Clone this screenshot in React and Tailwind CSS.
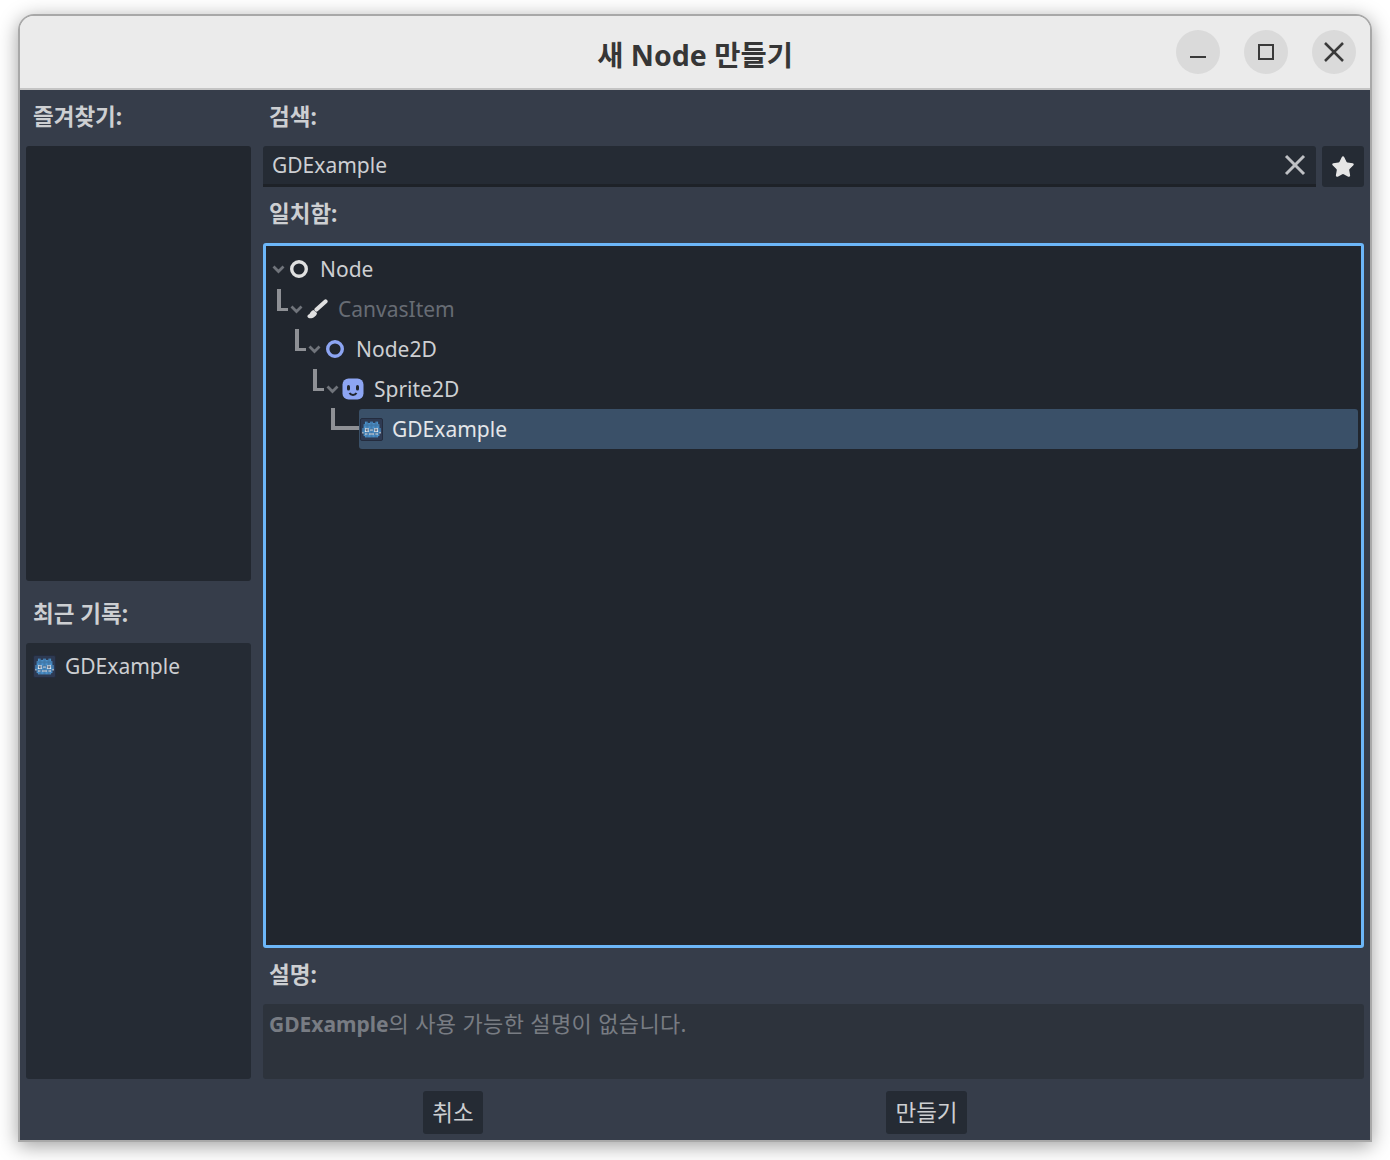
import { Star, X } from "lucide-react";

const FONT = "font-['Noto_Sans','Noto_Sans_CJK_KR',sans-serif]";

const godotPixels = [
  "................",
  "................",
  "...bb..bb..bb...",
  "...bbbbbbbbbb...",
  "..bbbbbbbbbbbb..",
  "..bbbbbbbbbbbb..",
  "..bbbbbbbbbbbb..",
  ".bbwwwbbbbwwwbb.",
  ".bbwdwbwwbwdwbb.",
  ".bbwwwbbbbwwwbb.",
  ".wbbbbbbbbbbbbw.",
  "..bwwbwwwwbwwb..",
  "..bbbbbbbbbbbb..",
  "...bbbbbbbbbb...",
  "................",
  "................",
];

const pixelColor = { b: "#4b92cc", w: "#dfeaf4", d: "#33415a" };

function GodotIcon() {
  return (
    <div className="w-[23px] h-[23px] shrink-0 rounded-[2px] bg-[#2e3a52] border border-[#242c3e] flex items-center justify-center">
      <svg width="21" height="21" viewBox="0 0 16 16">
        {godotPixels.map((row, y) =>
          row.split("").map((c, x) =>
            c === "." ? null : (
              <rect key={`${x}-${y}`} x={x} y={y} width="1.02" height="1.02" fill={pixelColor[c]} />
            )
          )
        )}
      </svg>
    </div>
  );
}

function Chevron() {
  return (
    <svg width="14" height="14" viewBox="0 0 14 14" className="shrink-0">
      <path d="M1.5 4.5 L6.5 9.5 L11.5 4.5" fill="none" stroke="#70747b" strokeWidth="2.8" />
    </svg>
  );
}

function Ring({ color }) {
  return (
    <svg width="20" height="20" viewBox="0 0 20 20" className="shrink-0">
      <circle cx="10" cy="10" r="7.3" fill="none" stroke={color} strokeWidth="3.4" />
    </svg>
  );
}

function BrushIcon() {
  return (
    <svg width="22" height="22" viewBox="0 0 22 22" className="shrink-0">
      <path d="M19.5 3.5 L10.5 11.5" fill="none" stroke="#e0e0e0" strokeWidth="4.2" strokeLinecap="round" />
      <path d="M7.5 12 L11 15 C10.5 18.5 6.5 20.8 3.5 20.3 C1 19.8 0.8 17.5 2.6 16.6 C4.4 15.8 4.4 13 7.5 12 Z" fill="#e0e0e0" />
    </svg>
  );
}

function SpriteIcon() {
  return (
    <svg width="24" height="24" viewBox="0 0 24 24" className="shrink-0">
      <rect x="1.5" y="1.5" width="21" height="21" rx="6" fill="#8da5f3" />
      <rect x="6" y="8" width="3" height="5.5" rx="1.5" fill="#21262e" />
      <rect x="15" y="8" width="3" height="5.5" rx="1.5" fill="#21262e" />
      <path d="M8.5 16 C10 18.5 14 18.5 15.5 16" fill="none" stroke="#21262e" strokeWidth="2" />
    </svg>
  );
}

function Connector() {
  return <div className="w-[11px] h-[22px] shrink-0 self-start border-l-4 border-b-[3px] border-[#8e9095]" />;
}

function TreeRow({ padding, icon, label, dim, first }) {
  return (
    <div className={`h-10 flex items-center ${padding}`}>
      {!first && <Connector />}
      <div className={first ? "" : "ml-[2px]"}>
        <Chevron />
      </div>
      <div className="w-[20px] ml-[3px] flex justify-center">{icon}</div>
      <span className={`ml-[11px] mt-[2px] text-[21px] ${dim ? "text-[#676c74]" : "text-[#cdcfd2]"}`}>{label}</span>
    </div>
  );
}

function SectionLabel({ children }) {
  return <div className="h-[56px] pl-[6px] pt-[10px] leading-[34px] font-bold text-[22.5px] text-[#cdcfd2]">{children}</div>;
}

function WindowButton({ children }) {
  return <div className="w-[44px] h-[44px] rounded-full bg-[#dadada] flex items-center justify-center text-[#3a3a3a]">{children}</div>;
}

export default function App() {
  return (
    <div className={`w-[1390px] h-[1160px] bg-white pl-[18px] pt-[14px] text-[22.5px] ${FONT}`}>
      <div className="w-[1354px] h-[1128px] flex flex-col rounded-t-[16px] border-2 border-[#a8a8a8] shadow-[0_4px_20px_rgba(0,0,0,0.38)] overflow-hidden">
        <div className="h-[74px] shrink-0 bg-[#ebebeb] border-b-2 border-[#c4c4c4] flex items-center justify-center relative">
          <span className="text-[28.5px] font-bold text-[#363636] mt-[7px]">새 Node 만들기</span>
          <div className="absolute right-[14px] top-[14px] flex gap-6">
            <WindowButton>
              <div className="w-[16px] h-[2px] bg-[#3a3a3a] mt-[10px]" />
            </WindowButton>
            <WindowButton>
              <div className="w-[16px] h-[16px] border-2 border-[#3a3a3a]" />
            </WindowButton>
            <WindowButton>
              <X size={36} strokeWidth={1.7} strokeLinecap="butt" />
            </WindowButton>
          </div>
        </div>

        <div className="flex-1 min-h-0 bg-[#363d4a] flex flex-col">
          <div className="flex-1 min-h-0 flex gap-3 px-[6px]">
            <div className="w-[225px] shrink-0 flex flex-col">
              <div className="pl-[1px]">
                <SectionLabel>즐겨찾기:</SectionLabel>
              </div>
              <div className="h-[435px] shrink-0 bg-[#22272f] rounded-[3px]" />
              <div className="h-[62px] shrink-0 pl-[7px] pt-[16px] leading-[34px] font-bold text-[#cdcfd2]">최근 기록:</div>
              <div className="flex-1 bg-[#252b34] rounded-[3px] pt-[11px] pl-[7px]">
                <div className="flex items-center h-[24px]">
                  <GodotIcon />
                  <span className="ml-[9px] mt-[2px] text-[21px] text-[#cdcfd2]">GDExample</span>
                </div>
              </div>
            </div>

            <div className="flex-1 min-w-0 flex flex-col">
              <SectionLabel>검색:</SectionLabel>
              <div className="flex gap-[6px] h-[41px] shrink-0">
                <div className="flex-1 bg-[#252b34] rounded-t-[3px] border-b-[3px] border-[#1e2228] flex items-center justify-between pl-[9px] pr-[3px]">
                  <span className="mt-[2px] text-[21px] text-[#cdcfd2]">GDExample</span>
                  <X size={36} strokeWidth={2} strokeLinecap="butt" className="text-[#bfc1c5]" />
                </div>
                <div className="w-[42px] bg-[#252b34] rounded-[3px] flex items-center justify-center">
                  <Star size={24} fill="#e6e6e6" stroke="#e6e6e6" strokeWidth={1.5} />
                </div>
              </div>
              <SectionLabel>일치함:</SectionLabel>
              <div className="flex-1 min-h-0 bg-[#21262e] border-[3px] border-[#6cb6f8] rounded-[3px] pt-[3px]">
                <TreeRow first padding="pl-[6px]" icon={<Ring color="#e0e0e0" />} label="Node" />
                <TreeRow padding="pl-[11px]" icon={<BrushIcon />} label="CanvasItem" dim />
                <TreeRow padding="pl-[29px]" icon={<Ring color="#8da5f3" />} label="Node2D" />
                <TreeRow padding="pl-[47px]" icon={<SpriteIcon />} label="Sprite2D" />
                <div className="h-10 flex pl-[65px] pr-[3px]">
                  <div className="w-[28px] h-[22px] shrink-0 -mt-[1px] border-l-4 border-b-4 border-[#8e9095]" />
                  <div className="flex-1 bg-[#3a5068] rounded-[3px] flex items-center pl-[1px]">
                    <GodotIcon />
                    <span className="ml-[9px] mt-[2px] text-[21px] text-[#e4e6e9]">GDExample</span>
                  </div>
                </div>
              </div>
              <SectionLabel>설명:</SectionLabel>
              <div className="h-[75px] shrink-0 bg-[#2d333c] rounded-[3px] px-[6px] pt-[3px] leading-[32px] text-[22px] tracking-[0.35px] text-[#787c83]">
                <span className="font-bold text-[21px] tracking-normal">GDExample</span>의 사용 가능한 설명이 없습니다.
              </div>
            </div>
          </div>

          <div className="shrink-0 flex justify-evenly pt-3 pb-[6px]">
            <div className="h-[43px] w-[60px] bg-[#252b34] rounded-[3px] flex items-center justify-center text-[#cdcfd2]">취소</div>
            <div className="h-[43px] w-[81px] bg-[#252b34] rounded-[3px] flex items-center justify-center text-[#cdcfd2]">만들기</div>
          </div>
        </div>
      </div>
    </div>
  );
}
